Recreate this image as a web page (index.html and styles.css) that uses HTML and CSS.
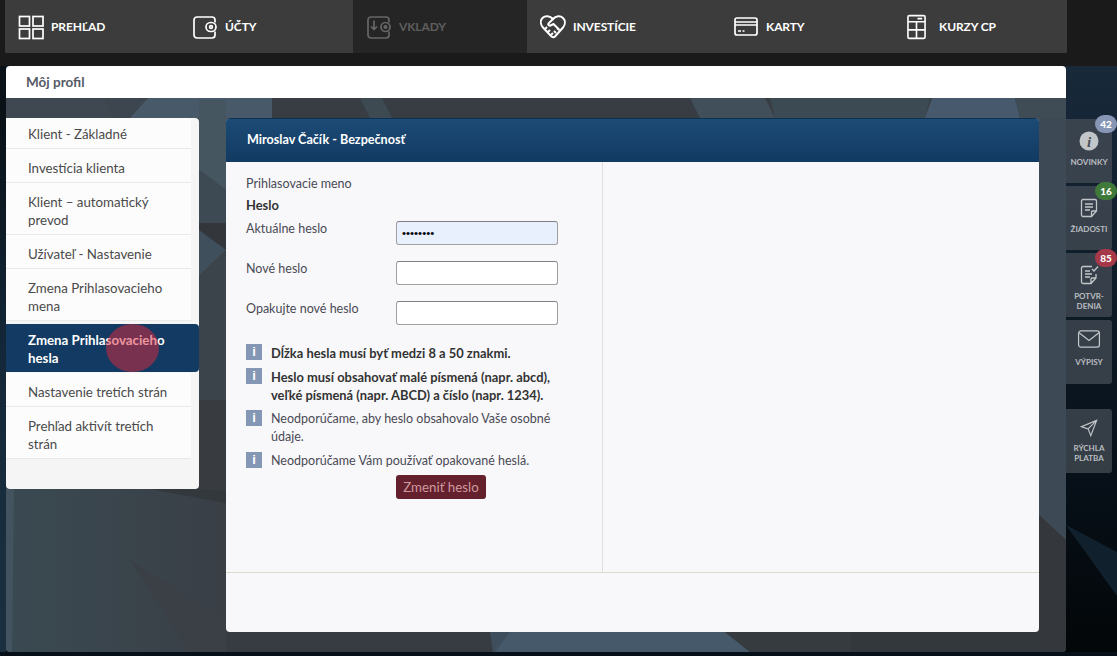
FILE: index.html
```html
<!DOCTYPE html>
<html lang="sk">
<head>
<meta charset="utf-8">
<title>Môj profil</title>
<link rel="stylesheet" href="styles.css">
</head>
<body>
<svg class="backdrop" viewBox="0 0 1117 656" preserveAspectRatio="none" aria-hidden="true">
  <defs>
    <linearGradient id="sky" x1="0" y1="0" x2="0" y2="1">
      <stop offset="0.1" stop-color="#18293a"/>
      <stop offset="0.7" stop-color="#07111a"/>
      <stop offset="1" stop-color="#030608"/>
    </linearGradient>
    <linearGradient id="edge" x1="0" y1="0" x2="0" y2="1">
      <stop offset="0.1" stop-color="#0a1218"/>
      <stop offset="0.5" stop-color="#14283a"/>
      <stop offset="1" stop-color="#1a3040"/>
    </linearGradient>
    <linearGradient id="low" x1="0" y1="0" x2="1" y2="0">
      <stop offset="0" stop-color="#3a4a52"/>
      <stop offset="1" stop-color="#3a3f46"/>
    </linearGradient>
    <clipPath id="panelclip"><rect x="6" y="66" width="1060" height="586" rx="4"/></clipPath>
  </defs>
  <rect width="1117" height="656" fill="url(#sky)"/>
  <rect x="0" y="66" width="6" height="590" fill="url(#edge)"/>
  <polygon points="1066,525 1117,552 1117,596" fill="#10212d"/>
  <rect x="0" y="652" width="1117" height="4" fill="#071018"/>
  <g clip-path="url(#panelclip)">
    <rect x="6" y="66" width="1060" height="586" fill="#383d43"/>
    <polygon points="6,98 105,98 120,130 6,140" fill="#3f4850"/>
    <polygon points="105,98 148,98 120,130" fill="#3d464e"/>
    <polygon points="148,98 272,98 272,118 130,118" fill="#485a69"/>
    <polygon points="360,98 382,98 392,118 370,118" fill="#3d4a52"/>
    <polygon points="690,98 765,98 775,118 700,118" fill="#414f5a"/>
    <polygon points="770,98 930,98 925,118 775,118" fill="#3c4a54"/>
    <polygon points="932,98 1015,98 1020,118 925,118" fill="#47596c"/>
    <polygon points="1015,98 1066,98 1066,118 1020,118" fill="#3f4b55"/>
    <polygon points="199,100 226,100 226,190 199,170" fill="#465661"/>
    <polygon points="199,170 226,190 226,223 199,223" fill="#3d4a54"/>
    <polygon points="199,223 226,223 226,250 199,232" fill="#33373b"/>
    <polygon points="199,230 226,250 199,276" fill="#3f4f5c"/>
    <polygon points="199,276 226,250 226,400 199,400" fill="#3b444a"/>
    <polygon points="199,400 226,400 226,632 199,632" fill="#383c41"/>
    <rect x="6" y="489" width="220" height="163" fill="url(#low)"/>
    <polygon points="150,489 199,489 226,490 226,503" fill="#33383c"/>
    <polygon points="130,560 226,620 226,652 190,652" fill="#3b3f46"/>
    <polygon points="6,489 14,489 12,652 6,652" fill="#43535f"/>
    <polygon points="226,632 490,632 520,652 226,652" fill="#373c42"/>
    <polygon points="490,632 520,632 505,652 493,652" fill="#3e4e5c"/>
    <polygon points="510,632 725,632 750,652 495,652" fill="#46596a"/>
    <polygon points="725,632 850,632 850,652 750,652" fill="#363b40"/>
    <polygon points="850,632 1066,632 1066,652 850,652" fill="#33383d"/>
    <polygon points="1039,118 1066,118 1066,540 1039,515" fill="#3d4a56"/>
    <polygon points="1039,515 1066,540 1066,652 1039,652" fill="#34383c"/>
  </g>
</svg>

<nav class="topbar">
  <a class="nav-item"><svg class="nav-icon" viewBox="0 0 26 26"><rect x="1.500" y="2.500" width="10" height="9.500"/><rect x="15" y="2.500" width="10" height="9.500"/><rect x="1.500" y="15" width="10" height="9.500"/><rect x="15" y="15" width="10" height="9.500"/></svg><span>PREHĽAD</span></a>
  <a class="nav-item"><svg class="nav-icon" viewBox="0 0 26 26"><path d="M5 3h15a3 3 0 0 1 3 3v2.500M23 17.500V21a3 3 0 0 1-3 3H5a3 3 0 0 1-3-3V6a3 3 0 0 1 3-3"/><rect x="14" y="8.500" width="10" height="9" rx="4.500"/><circle cx="19" cy="13" r="1.400"/></svg><span>ÚČTY</span></a>
  <a class="nav-item is-off"><svg class="nav-icon" viewBox="0 0 26 26"><path d="M5 3h15a3 3 0 0 1 3 3v2.500M23 17.500V21a3 3 0 0 1-3 3H5a3 3 0 0 1-3-3V6a3 3 0 0 1 3-3"/><rect x="15" y="8.500" width="9" height="9" rx="4.500"/><circle cx="19.500" cy="13" r="1.200"/><path d="M8 6.500v9M5 12.500l3 3 3-3"/></svg><span>VKLADY</span></a>
  <a class="nav-item"><svg class="nav-icon nav-icon-heavy" viewBox="0 0 26 26"><path d="M13 5C10 1.500 5 1.500 2.500 4S0.500 10.500 3 13.500L11 22c1.500 1.500 3 1.500 4 .5l8-9c2.500-3 2.500-7 0-9.500S16 1.500 13 5z"/><path d="M13 5l-4.500 4.500c-1 1 .5 2.500 2 2l3-1.500 6 6M5 15l2-2M8 18l2-2M11 21l2-2M16 19l-2-2M19 16l-2-2"/></svg><span>INVESTÍCIE</span></a>
  <a class="nav-item nav-wide"><svg class="nav-icon nav-icon-card" viewBox="0 0 24 19"><rect x="1" y="1" width="22" height="17" rx="2"/><path d="M1 5h22M1 8h22M4 14h3M8.500 14h2"/></svg><span>KARTY</span></a>
  <a class="nav-item nav-wide"><svg class="nav-icon" viewBox="0 0 20 26"><rect x="1" y="1" width="18" height="24" rx="1.500"/><path d="M1 7.500h18M1 16h18M10 7.500V25M11 4.200h5"/></svg><span>KURZY CP</span></a>
</nav>

<main class="panel">
  <header class="panel-title">Môj profil</header>
  <div class="panel-body">
    <aside class="sidebar">
      <ul class="side-list">
        <li class="side-link">Klient - Základné</li>
        <li class="side-link">Investícia klienta</li>
        <li class="side-link">Klient – automatický prevod</li>
        <li class="side-link">Užívateľ - Nastavenie</li>
        <li class="side-link">Zmena Prihlasovacieho mena</li>
        <li class="side-link is-active">Zmena Prihlasovacieho hesla<span class="click-mark"></span></li>
        <li class="side-link">Nastavenie tretích strán</li>
        <li class="side-link">Prehľad aktivít tretích strán</li>
      </ul>
    </aside>
    <section class="card">
      <h2 class="card-head">Miroslav Čačík - Bezpečnosť</h2>
      <div class="card-main">
        <form class="form-col">
          <p class="plain">Prihlasovacie meno</p>
          <p class="plain strong">Heslo</p>
          <label class="field"><span>Aktuálne heslo</span><input class="input is-filled" type="password" value="12345678"></label>
          <label class="field"><span>Nové heslo</span><input class="input" type="password"></label>
          <label class="field"><span>Opakujte nové heslo</span><input class="input" type="password"></label>
          <ul class="notes">
            <li class="note strong"><i class="info">i</i><span>Dĺžka hesla musí byť medzi 8 a 50 znakmi.</span></li>
            <li class="note strong"><i class="info">i</i><span>Heslo musí obsahovať malé písmená (napr. abcd), veľké písmená (napr. ABCD) a číslo (napr. 1234).</span></li>
            <li class="note"><i class="info">i</i><span>Neodporúčame, aby heslo obsahovalo Vaše osobné údaje.</span></li>
            <li class="note"><i class="info">i</i><span>Neodporúčame Vám používať opakované heslá.</span></li>
          </ul>
          <button class="submit" type="button">Zmeniť heslo</button>
        </form>
        <div class="empty-col"></div>
      </div>
      <div class="card-foot"></div>
    </section>
  </div>
</main>

<aside class="tabs">
  <a class="tab"><b class="badge badge-blue">42</b><svg class="tab-icon" viewBox="0 0 20 20"><circle class="solid" cx="10" cy="10" r="9.500"/><text class="tab-i" x="10" y="15.500">i</text></svg><span>NOVINKY</span></a>
  <a class="tab"><b class="badge badge-green">16</b><svg class="tab-icon" viewBox="0 0 20 20"><path d="M4 1.500h12a1.500 1.500 0 0 1 1.500 1.500v10l-5 5.500H4A1.500 1.500 0 0 1 2.500 17V3A1.500 1.500 0 0 1 4 1.500zM6 6h8M6 9h8M6 12h5M12.500 18.500V14a1 1 0 0 1 1-1h4"/></svg><span>ŽIADOSTI</span></a>
  <a class="tab"><b class="badge badge-red">85</b><svg class="tab-icon" viewBox="0 0 20 20"><path d="M13 1.500H4A1.500 1.500 0 0 0 2.500 3v14A1.500 1.500 0 0 0 4 18.500h8l5-5.500V9M6 6h5M6 9h7M6 12h5M12 18.500V14a1 1 0 0 1 1-1h4M13 4l2 2 4-4.500"/></svg><span>POTVR-<br>DENIA</span></a>
  <a class="tab"><svg class="tab-icon tab-icon-wide tab-icon-mail" viewBox="0 0 24 19"><rect x="1" y="1" width="22" height="17" rx="2.500"/><path d="M1.500 3l10.500 8 10.500-8"/></svg><span>VÝPISY</span></a>
  <a class="tab tab-apart"><svg class="tab-icon tab-icon-wide" viewBox="0 0 20 20"><path d="M18.500 1.500L1.500 8.500l7.500 2.500 3 7.500zM9 11l9.500-9.500"/></svg><span>RÝCHLA<br>PLATBA</span></a>
</aside>
</body>
</html>
```
FILE: styles.css
```css
* { box-sizing: border-box; }
html, body { margin: 0; height: 656px; overflow: hidden; }
body {
  position: relative;
  width: 1117px;
  font-family: "Lato", "Noto Sans", sans-serif;
  font-size: 13.300px;
  color: #333;
  background: #07111a;
}
p, ul, h2 { margin: 0; padding: 0; list-style: none; }

.backdrop { position: absolute; inset: 0; width: 100%; height: 100%; }

.topbar {
  position: relative;
  height: 66px;
  padding-left: 5px;
  padding-right: 50px;
  background: #1a1a1a;
  display: flex;
  align-items: flex-start;
}
.nav-item {
  width: 174px;
  height: 53px;
  padding-left: 13px;
  background: #3c3c3c;
  color: #fff;
  display: flex;
  align-items: center;
  gap: 7px;
  font-size: 12px;
  font-weight: 700;
  letter-spacing: -.1px;
}
.nav-item:last-child { flex: 1; }
.nav-wide { padding-left: 32px; }
.is-off { background: #252525; color: #5e5e5e; }
.nav-icon {
  width: 26px;
  height: 26px;
  fill: none;
  stroke: currentColor;
  stroke-width: 1.700;
  flex: none;
}
.nav-item.is-off .nav-icon { stroke: #666; }
.nav-icon-heavy { stroke-width: 2; }
.nav-icon-card { height: 19px; }
.nav-wide:last-child .nav-icon { width: 19px; margin-right: 6px; }

.panel {
  position: relative;
  width: 1060px;
  height: 586px;
  margin-left: 6px;
}
.panel-title {
  height: 32px;
  padding-left: 20px;
  background: #fff;
  border-radius: 4px 4px 0 0;
  font-weight: 700;
  font-size: 13.500px;
  color: #555a66;
  line-height: 32px;
}
.panel-body {
  height: 554px;
  padding: 20px 27px 20px 0;
  display: flex;
  gap: 27px;
}

.sidebar {
  width: 193px;
  height: 371px;
  background: #f5f5f5;
  border-radius: 0 4px 4px 4px;
  flex: none;
}
.side-link {
  position: relative;
  width: 185px;
  padding: 10px 22px 5px;
  background: #fcfcfc;
  border-bottom: 1px solid #e9e9e9;
  line-height: 18px;
  color: #4a4a4a;
}
.side-link:first-child { padding-top: 7px; }
.side-link:nth-child(5) { margin-bottom: 3px; }
.side-link.is-active {
  width: 193px;
  padding: 7px 22px 5px;
  background: #123a62;
  color: #fff;
  font-weight: 700;
  border: 0;
  border-radius: 0 4px 4px 0;
  margin-bottom: 1px;
}
.click-mark {
  position: absolute;
  left: 100px;
  top: 0;
  width: 53px;
  height: 48px;
  border-radius: 50%;
  background: rgba(221, 40, 60, .5);
}

.card {
  flex: 1;
  height: 514px;
  background: #f8f8fa;
  border-radius: 4px;
  overflow: hidden;
  display: flex;
  flex-direction: column;
}
.card-head {
  height: 44px;
  padding-left: 21px;
  background: linear-gradient(#1c4b76, #123a62);
  border-top: 1px solid #0d3050;
  color: #fff;
  font-size: 12.600px;
  font-weight: 700;
  line-height: 41px;
}
.card-main { height: 411px; flex: none; display: flex; border-bottom: 1px solid #dcdbd0; }
.form-col {
  width: 377px;
  padding: 13px 20px 0;
  border-right: 1px solid #dfdfdf;
  font-size: 12.500px;
  color: #4a4a55;
}
.empty-col { flex: 1; }
.card-foot { flex: 1; }

.plain { line-height: 18px; margin-bottom: 3px; }
.strong { font-weight: 700; font-size: 12.900px; color: #333; }
.field {
  height: 40px;
  display: flex;
  align-items: flex-start;
  line-height: 18px;
}
.field span { width: 150px; padding-top: 3px; }
.input {
  width: 162px;
  height: 24px;
  margin-top: 4px;
  padding: 0 5px;
  border: 1px solid #a0a0a0;
  border-top-color: #808080;
  border-radius: 3px;
  background: #fff;
  font-size: 11.500px;
}
.is-filled { background: #e8f0fe; }
.notes { margin-top: 7px; }
.note {
  display: flex;
  gap: 9px;
  line-height: 18px;
  margin-bottom: 6px;
}
.info {
  flex: none;
  width: 16px;
  height: 16px;
  background: #8497b4;
  color: #fff;
  font: 700 13px/16px "Liberation Sans", sans-serif;
  text-align: center;
}
.submit {
  display: block;
  width: 90px;
  height: 24px;
  margin: -1px 0 0 150px;
  padding: 0;
  background: #64202c;
  border: 0;
  border-radius: 3px;
  color: #cf9aa0;
  font: 13.300px "Lato", sans-serif;
}

.tabs {
  position: absolute;
  left: 1066px;
  top: 119px;
  width: 46px;
  display: flex;
  flex-direction: column;
  gap: 3px;
}
.tab {
  position: relative;
  height: 64px;
  padding-top: 12px;
  background: rgba(72, 80, 88, .7);
  border-radius: 0 3px 3px 0;
  color: #b9bdc0;
  font-size: 8px;
  font-weight: 700;
  line-height: 10px;
  text-align: center;
  display: flex;
  flex-direction: column;
  align-items: center;
  gap: 6px;
}
.tab-apart { margin-top: 22px; }
.tab-icon {
  width: 20px;
  height: 20px;
  flex: none;
  fill: none;
  stroke: #c2c6c9;
  stroke-width: 1.300;
}
.tab-icon-wide { width: 24px; height: 18px; margin-top: -2px; }
.tab-icon-mail { margin-bottom: 3px; }
.solid { fill: #c2c6c9; stroke: none; }
.tab-i {
  fill: #4a5057;
  stroke: none;
  font: italic 700 15px "Liberation Serif", serif;
  text-anchor: middle;
}
.badge {
  position: absolute;
  right: -5px;
  top: -4px;
  width: 22px;
  height: 18px;
  border-radius: 9px;
  color: #fff;
  font-size: 10px;
  line-height: 18px;
}
.badge-blue { background: #8796b5; }
.badge-green { background: #3f7a3a; }
.badge-red { background: #a5394a; }
```
